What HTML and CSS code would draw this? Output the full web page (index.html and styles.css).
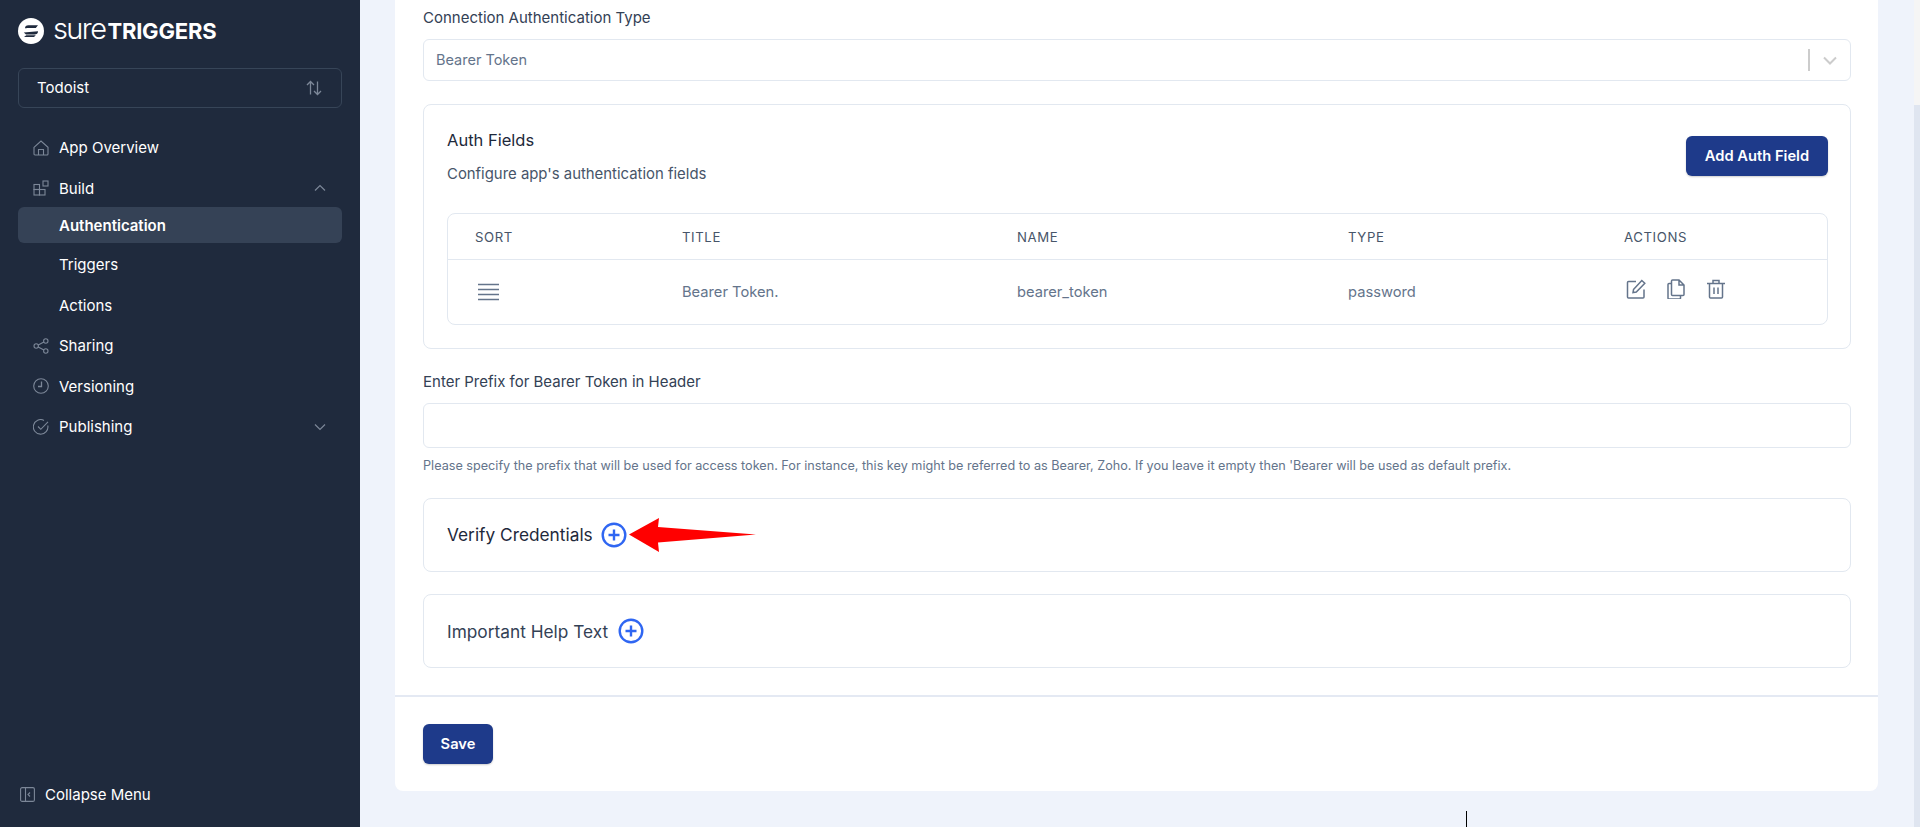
FILE: index.html
```html
<!DOCTYPE html>
<html lang="en">

<head>
    <meta charset="UTF-8">
    <meta name="viewport" content="width=device-width, initial-scale=1.0">
    <title>Authentication - Todoist</title>
    <link rel="stylesheet" href="styles.css">
</head>

<body>
    <aside class="sidebar">
        <div class="logo">
            <svg class="logo-mark" width="26" height="26" viewBox="0 0 26 26">
                <circle cx="13" cy="13" r="13" fill="#fff"/>
                <path d="M7 10.2c0-2 1.3-3 3.4-3H20l-2.2 2.7H10.6c-1 0-1.8 0-3.6.3zM5.8 14.5l14-1.2c.2 0 .2 0 .2.2 0 2-1.300 3-3.400 3H8zM6 19l2.300-1.700h9.500l-1.800 1.700z" fill="#1f2a3d"/>
            </svg>
            <span class="logo-sure">sure</span><span class="logo-triggers">TRIGGERS</span>
        </div>

        <div class="app-select">
            <span>Todoist</span>
            <svg width="18" height="18" viewBox="0 0 18 18" fill="none" stroke="#7c8798" stroke-width="1.300">
                <path d="M5.500 15.500V2.500M2 6l3.500-3.500L9 6M12.500 2.500v13M9 12l3.500 3.500L16 12"/>
            </svg>
        </div>

        <nav class="nav">
            <a class="nav-item">
                <svg class="nav-icon" viewBox="0 0 16 16" fill="none" stroke="#7c8798" stroke-width="1.100">
                    <path d="M1 7.300 8 1l7 6.300V14a1 1 0 0 1-1 1H2a1 1 0 0 1-1-1zM5.500 15V9.500h5V15"/>
                </svg>
                App Overview
            </a>
            <a class="nav-item">
                <svg class="nav-icon" viewBox="0 0 16 16" fill="none" stroke="#7c8798" stroke-width="1.100">
                    <rect x="1" y="4.500" width="5.500" height="5"/>
                    <rect x="1" y="9.500" width="5.500" height="5.500"/>
                    <rect x="6.500" y="9.500" width="5.500" height="5.500"/>
                    <rect x="10" y="1" width="5" height="5"/>
                </svg>
                Build
                <svg class="nav-caret" viewBox="0 0 12 8" fill="none" stroke="#7c8798" stroke-width="1.200"><path d="M1 6.500 6 1.500l5 5"/></svg>
            </a>
            <a class="nav-item sub active">Authentication</a>
            <a class="nav-item sub">Triggers</a>
            <a class="nav-item sub">Actions</a>
            <a class="nav-item">
                <svg class="nav-icon" viewBox="0 0 16 16" fill="none" stroke="#7c8798" stroke-width="1.100">
                    <circle cx="3.200" cy="8" r="2.200"/>
                    <circle cx="12.800" cy="3" r="2.200"/>
                    <circle cx="12.800" cy="13" r="2.200"/>
                    <path d="m5.200 7 5.700-3M5.200 9l5.700 3"/>
                </svg>
                Sharing
            </a>
            <a class="nav-item">
                <svg class="nav-icon" viewBox="0 0 16 16" fill="none" stroke="#7c8798" stroke-width="1.100">
                    <circle cx="8" cy="8" r="7.300"/>
                    <path d="M8.500 3.500V8.500H5" stroke-width="1.300"/>
                </svg>
                Versioning
            </a>
            <a class="nav-item">
                <svg class="nav-icon" viewBox="0 0 16 16" fill="none" stroke="#7c8798" stroke-width="1.100">
                    <path d="M14.800 6.500A7.300 7.300 0 1 1 11 1.400"/>
                    <path d="m5 7.500 2.800 2.800L15 2.800"/>
                </svg>
                Publishing
                <svg class="nav-caret" viewBox="0 0 12 8" fill="none" stroke="#7c8798" stroke-width="1.200"><path d="M1 1.500 6 6.500l5-5"/></svg>
            </a>
        </nav>

        <div class="collapse">
            <svg width="15" height="15" viewBox="0 0 15 15" fill="none" stroke="#7c8798" stroke-width="1.100">
                <rect x=".6" y=".6" width="13.800" height="13.800" rx="1.500"/>
                <path d="M5.500.6v13.800M10 5.500 8 7.500l2 2"/>
            </svg>
            Collapse Menu
        </div>
    </aside>

    <main class="main">
        <section class="panel">
            <div class="form">
                <label class="field-label">Connection Authentication Type</label>
                <div class="select">
                    <span>Bearer Token</span>
                    <span class="select-sep"></span>
                    <svg width="14" height="9" viewBox="0 0 14 9" fill="none" stroke="#ccc" stroke-width="2"><path d="m1 1.500 6 6 6-6"/></svg>
                </div>

                <div class="card auth-card">
                    <div class="auth-head">
                        <div>
                            <h3>Auth Fields</h3>
                            <p>Configure app's authentication fields</p>
                        </div>
                        <button class="btn btn-auth">Add Auth Field</button>
                    </div>

                    <div class="table">
                        <div class="row head">
                            <span>SORT</span>
                            <span>TITLE</span>
                            <span>NAME</span>
                            <span>TYPE</span>
                            <span>ACTIONS</span>
                        </div>
                        <div class="row body">
                            <svg class="sort-icon" width="22" height="18" viewBox="0 0 22 18" stroke="#64748b" stroke-width="1.300">
                                <path d="M0 1.500h21M0 6.500h21M0 11.500h21M0 16.500h21"/>
                            </svg>
                            <span>Bearer Token.</span>
                            <span>bearer_token</span>
                            <span>password</span>
                            <div class="actions">
                                <svg width="20" height="20" viewBox="0 0 20 20" fill="none" stroke="#64748b" stroke-width="1.500">
                                    <path d="M10 2.500H2.500a1 1 0 0 0-1 1V18a1 1 0 0 0 1 1H17a1 1 0 0 0 1-1v-7.500"/>
                                    <path d="M7.500 10.500 15.800 1.500l3 2.800-8.500 8.800-3.300.5z"/>
                                </svg>
                                <svg width="20" height="20" viewBox="0 0 20 20" fill="none" stroke="#64748b" stroke-width="1.500">
                                    <path d="M6.500 1h6.500l5 5v9.500a1 1 0 0 1-1 1H6.500a1 1 0 0 1-1-1V2a1 1 0 0 1 1-1zM13 1v5h5"/>
                                    <path d="M5.500 4.500H3a1 1 0 0 0-1 1V19a1 1 0 0 0 1 1h10.500a1 1 0 0 0 1-1v-2.500"/>
                                </svg>
                                <svg width="20" height="20" viewBox="0 0 20 20" fill="none" stroke="#64748b" stroke-width="1.500">
                                    <path d="M1 4.500h18M7 4.500V1.500h6v3M3.500 4.500V18a1 1 0 0 0 1 1h11a1 1 0 0 0 1-1V4.500M8 8.500V15M12 8.500V15"/>
                                </svg>
                            </div>
                        </div>
                    </div>
                </div>

                <label class="field-label">Enter Prefix for Bearer Token in Header</label>
                <div class="input"></div>
                <p class="help">Please specify the prefix that will be used for access token. For instance, this key might be referred to as Bearer, Zoho. If you leave it empty then 'Bearer will be used as default prefix.</p>

                <div class="card toggle-card verify">
                    <span class="toggle-title">Verify Credentials</span>
                    <svg class="plus" width="26" height="26" viewBox="0 0 26 26" fill="none" stroke="#2f66f2" stroke-width="2.400">
                        <circle cx="13" cy="13" r="11.300"/>
                        <path d="M7.500 13h11M13 7.500v11"/>
                    </svg>
                    <svg class="arrow" width="128" height="34" viewBox="0 0 128 34">
                        <path d="M0 16.500 30 0l-1 9 98 7.500-98 8 1 9.500z" fill="#f00"/>
                    </svg>
                </div>

                <div class="card toggle-card important">
                    <span class="toggle-title">Important Help Text</span>
                    <svg class="plus" width="26" height="26" viewBox="0 0 26 26" fill="none" stroke="#2f66f2" stroke-width="2.400">
                        <circle cx="13" cy="13" r="11.300"/>
                        <path d="M7.500 13h11M13 7.500v11"/>
                    </svg>
                </div>
            </div>

            <div class="footer">
                <button class="btn">Save</button>
            </div>
        </section>
        <span class="cursor"></span>
    </main>

    <div class="scrollbar"><span class="thumb"></span></div>
</body>

</html>
```

FILE: styles.css
```css
* {
    margin: 0;
    padding: 0;
    box-sizing: border-box;
}

body {
    font-family: Inter, "Open Sans", sans-serif;
    font-size: 14px;
    background-color: #eff3fb;
    color: #334155;
    display: flex;
    height: 100vh;
    overflow: hidden;
}

/* Sidebar */
.sidebar {
    width: 360px;
    flex-shrink: 0;
    background-color: #1f2a3d;
    color: #fff;
    padding: 18px 18px 0;
    display: flex;
    flex-direction: column;
}

.logo {
    display: flex;
    align-items: center;
    height: 26px;
}

.logo-mark {
    margin-right: 9px;
}

.logo-sure {
    font-size: 29px;
    font-weight: 300;
    letter-spacing: -1.600px;
    margin-right: 2px;
    margin-top: -5px;
}

.logo-triggers {
    font-size: 22px;
    font-weight: 700;
    letter-spacing: -0.2px;
}

.app-select {
    height: 40px;
    margin-top: 24px;
    padding: 0 18px;
    border: 1px solid #374558;
    border-radius: 6px;
    display: flex;
    align-items: center;
    justify-content: space-between;
    font-size: 15px;
}

.app-select span {
    margin-top: -2px;
}

.nav {
    margin-top: 19.500px;
    display: flex;
    flex-direction: column;
}

.nav-item {
    height: 40.500px;
    padding-left: 15px;
    display: flex;
    align-items: center;
    gap: 10px;
    font-size: 15px;
    position: relative;
}

.nav-icon {
    width: 16px;
    height: 16px;
    flex-shrink: 0;
}

.nav-caret {
    width: 12px;
    height: 8px;
    margin-left: auto;
    margin-right: 16px;
}

.nav-item.sub {
    padding-left: 41px;
}

.nav-item.active {
    height: 36px;
    margin-top: -1.500px;
    margin-bottom: 1.500px;
    background-color: #354256;
    border-radius: 6px;
    font-weight: 600;
}

.collapse {
    margin-top: auto;
    margin-bottom: 23px;
    padding-left: 2px;
    display: flex;
    align-items: center;
    gap: 10px;
    font-size: 15px;
}

/* Main panel */
.main {
    flex: 1;
    padding: 0 36px 0 35px;
    position: relative;
}

.panel {
    background-color: #fff;
    border-radius: 0 0 8px 8px;
    height: 791px;
    display: flex;
    flex-direction: column;
}

.form {
    flex: 1;
    padding: 9px 27px 0 28px;
    display: flex;
    flex-direction: column;
    border-bottom: 2px solid #e4e9f3;
}

.field-label {
    font-size: 15px;
    line-height: 18px;
    color: #334155;
}

.select {
    height: 42px;
    margin-top: 12px;
    padding: 0 13px 0 12px;
    border: 1px solid #e2e8f0;
    border-radius: 6px;
    display: flex;
    align-items: center;
    font-size: 14.500px;
    color: #64748b;
}

.select > span:first-child {
    margin-top: -2px;
}

.select-sep {
    width: 2px;
    height: 22px;
    margin-left: auto;
    margin-right: 13px;
    background-color: #ccc;
}

.card {
    border: 1px solid #e2e8f0;
    border-radius: 8px;
}

.auth-card {
    height: 245px;
    margin-top: 23px;
    margin-bottom: 24px;
    padding: 23px 22px 0 23px;
}

.auth-head {
    display: flex;
    justify-content: space-between;
    align-items: flex-start;
    height: 85px;
}

.auth-head h3 {
    font-size: 16.500px;
    font-weight: 400;
    line-height: 24px;
    color: #1e293b;
}

.auth-head p {
    margin-top: 12px;
    font-size: 14.900px;
    line-height: 20px;
    color: #475569;
}

.btn {
    height: 40px;
    padding: 0 18px;
    border: none;
    border-radius: 6px;
    background-color: #1e3a8a;
    color: #fff;
    font-family: inherit;
    font-size: 14.700px;
    font-weight: 600;
    box-shadow: 0 1px 2px rgba(0, 0, 0, 0.2);
}

.btn-auth {
    margin-top: 8px;
    width: 142px;
    padding: 0;
}

.table {
    border: 1px solid #e2e8f0;
    border-radius: 8px;
    height: 112px;
}

.row {
    display: grid;
    grid-template-columns: 207px 335px 331px 276px 1fr;
    padding-left: 27px;
    align-items: center;
}

.row.head {
    height: 46px;
    border-bottom: 1px solid #e2e8f0;
    font-size: 13.200px;
    font-weight: 400;
    letter-spacing: 0.6px;
    color: #475569;
}

.row.body {
    height: 64px;
    font-size: 14.700px;
    color: #64748b;
}

.sort-icon {
    margin-left: 3px;
}

.actions {
    display: flex;
    gap: 20px;
    margin-top: -6px;
    margin-left: 2px;
}

.input {
    height: 45px;
    margin-top: 12px;
    border: 1px solid #e2e8f0;
    border-radius: 6px;
}

.help {
    margin-top: 10px;
    font-size: 12.650px;
    line-height: 16px;
    color: #64748b;
}

.toggle-card {
    height: 74px;
    margin-top: 24px;
    padding-left: 23px;
    display: flex;
    align-items: center;
    font-size: 17.300px;
    color: #1e293b;
    position: relative;
}

.toggle-title {
    margin-top: -1px;
}

.toggle-card.important {
    color: #334155;
    margin-top: 22px;
}

.important .toggle-title {
    margin-top: 0;
}

.plus {
    margin-left: 10px;
}

.verify .plus {
    margin-left: 8px;
}

/* red annotation drawn over the page */
.arrow {
    position: absolute;
    left: 205px;
    top: 19px;
}

.footer {
    padding: 27px 0 0 28px;
    height: 94px;
}

.footer .btn {
    width: 70px;
    padding: 0;
}

.cursor {
    position: absolute;
    left: 1106px;
    top: 811px;
    width: 1px;
    height: 16px;
    background-color: #000;
}

/* Scrollbar */
.scrollbar {
    width: 6px;
    flex-shrink: 0;
    background-color: #f5f5f5;
    padding-top: 105px;
}

.thumb {
    display: block;
    height: 722px;
    background-color: #dfe5f0;
}
```
